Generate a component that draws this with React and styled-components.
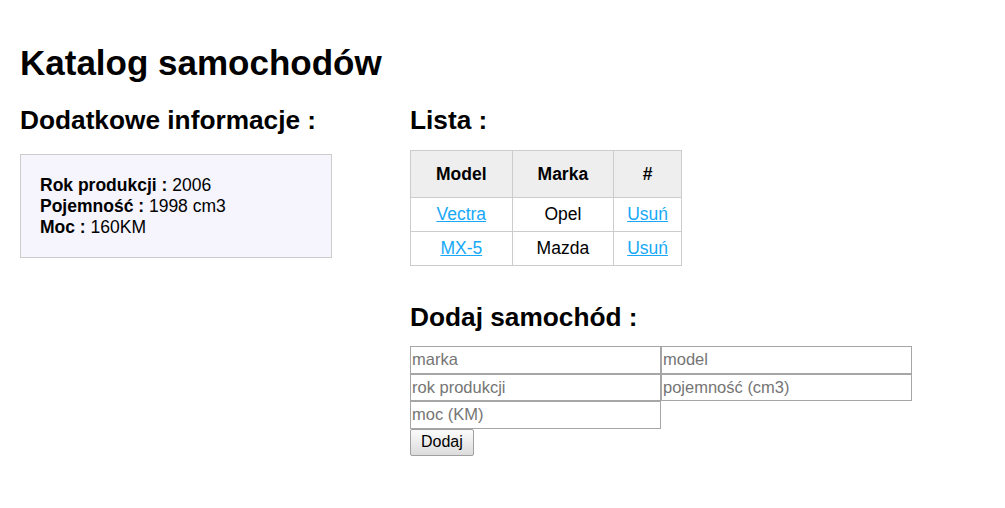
import React from "react";
import styled, { createGlobalStyle } from "styled-components";

const GlobalStyle = createGlobalStyle`
  body {
    margin: 0;
    background: #fff;
    color: #000;
    font-family: "Liberation Sans", Arial, sans-serif;
    font-size: 17.5px;
  }
`;

const cars = [
  { model: "Vectra", marka: "Opel" },
  { model: "MX-5", marka: "Mazda" },
];

function App() {
  return (
    <>
      <GlobalStyle />
      <Page>
        <Title>Katalog samochodów</Title>
        <Columns>
          <Side>
            <Subtitle>Dodatkowe informacje :</Subtitle>
            <InfoBox>
              <div>
                <b>Rok produkcji :</b> 2006
              </div>
              <div>
                <b>Pojemność :</b> 1998 cm3
              </div>
              <div>
                <b>Moc :</b> 160KM
              </div>
            </InfoBox>
          </Side>
          <Main>
            <Subtitle>Lista :</Subtitle>
            <Table>
              <thead>
                <tr>
                  <Th>Model</Th>
                  <Th>Marka</Th>
                  <Th>#</Th>
                </tr>
              </thead>
              <tbody>
                {cars.map((car) => (
                  <tr key={car.model}>
                    <Td>
                      <A href="#">{car.model}</A>
                    </Td>
                    <Td>{car.marka}</Td>
                    <Td>
                      <A href="#">Usuń</A>
                    </Td>
                  </tr>
                ))}
              </tbody>
            </Table>
            <Subtitle $top={36} $bottom={13}>
              Dodaj samochód :
            </Subtitle>
            <Form onSubmit={(e) => e.preventDefault()}>
              <Input placeholder="marka" />
              <Input placeholder="model" />
              <Input placeholder="rok produkcji" />
              <Input placeholder="pojemność (cm3)" />
              <Input placeholder="moc (KM)" />
              <Break />
              <Button type="submit">Dodaj</Button>
            </Form>
          </Main>
        </Columns>
      </Page>
    </>
  );
}

const Page = styled.div`
  padding: 20px;
`;

const Title = styled.h1`
  font-size: 35px;
  font-weight: bold;
  margin: 23px 0 22px;
`;

const Columns = styled.div`
  display: grid;
  grid-template-columns: 390px 1fr;
  align-items: start;
`;

const Side = styled.div``;
const Main = styled.div``;

const Subtitle = styled.h2`
  font-size: 26.25px;
  font-weight: bold;
  margin: ${(p) => p.$top || 0}px 0 ${(p) => p.$bottom ?? 14}px;
`;

const InfoBox = styled.div`
  box-sizing: border-box;
  width: 312px;
  margin-top: 18px;
  padding: 20px 19px 19px;
  background: #f6f4fd;
  border: 1px solid #cccccc;
`;

const Table = styled.table`
  border-collapse: collapse;
  text-align: center;
`;

const Th = styled.th`
  background: #eeeeee;
  border: 1px solid #cccccc;
  padding: 13px 25px;
  line-height: 20px;
  font-weight: bold;
`;

const Td = styled.td`
  border: 1px solid #cccccc;
  padding: 6px 13px 7px;
  line-height: 20px;
`;

const A = styled.a`
  color: #17a9f7;
  text-decoration: underline;
`;

const Form = styled.form`
  display: flex;
  flex-wrap: wrap;
  width: 502px;
`;

const Input = styled.input`
  box-sizing: border-box;
  width: 251px;
  height: 27.5px;
  margin: 0;
  padding: 3px 1px;
  border: 1px solid #a6a6a6;
  border-radius: 0;
  font-family: "Liberation Sans", Arial, sans-serif;
  font-size: 16.5px;
  color: #000;
  outline: none;

  &::placeholder {
    color: #757575;
  }
`;

const Break = styled.div`
  flex-basis: 100%;
  height: 0;
`;

const Button = styled.button`
  box-sizing: border-box;
  height: 27px;
  padding: 3px 10px;
  margin: 0;
  border: 1px solid #a0a0a0;
  border-radius: 2px;
  background: linear-gradient(#fbfbfb, #dcdcdc);
  font-family: "Liberation Sans", Arial, sans-serif;
  font-size: 16px;
  color: #000;
`;

export default App;
